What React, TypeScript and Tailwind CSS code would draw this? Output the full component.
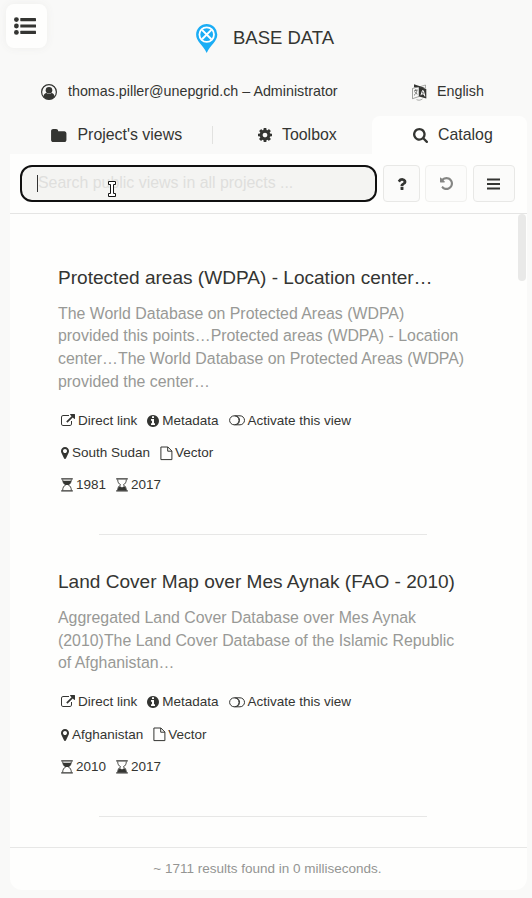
import React from "react";

const paths = {
  search:
    "M1216 832q0-185-131.5-316.5t-316.5-131.5-316.5 131.5-131.5 316.5 131.5 316.5 316.5 131.5 316.5-131.5 131.5-316.5zm512 832q0 52-38 90t-90 38q-54 0-90-38l-343-342q-179 124-399 124-143 0-273.5-55.5t-225-150-150-225-55.5-273.5 55.5-273.5 150-225 225-150 273.5-55.5 273.5 55.5 225 150 150 225 55.5 273.5q0 220-124 399l343 343q37 37 37 90z",
  cog: "M1152 896q0-106-75-181t-181-75-181 75-75 181 75 181 181 75 181-75 75-181zm512-109v222q0 12-8 23t-20 13l-185 28q-19 54-39 91 35 50 107 138 10 12 10 25t-9 23q-27 37-99 108t-94 71q-12 0-26-9l-138-108q-44 23-91 38-16 136-29 186-7 28-36 28h-222q-14 0-24.5-8.5t-11.5-21.5l-28-184q-49-16-90-37l-141 107q-10 9-25 9-14 0-25-11-126-114-165-168-7-10-7-23 0-12 8-23 15-21 51-66.5t54-70.5q-27-50-41-99l-183-27q-13-2-21-12.5t-8-23.5v-222q0-12 8-23t19-13l186-28q14-46 39-92-40-57-107-138-10-12-10-24 0-10 9-23 26-36 98.5-107.5t94.5-71.5q13 0 26 10l138 107q44-23 91-38 16-136 29-186 7-28 36-28h222q14 0 24.5 8.5t11.5 21.5l28 184q49 16 90 37l142-107q9-9 24-9 13 0 25 10 129 119 165 170 7 8 7 22 0 12-8 23-15 21-51 66.5t-54 70.5q26 50 41 98l183 28q13 2 21 12.5t8 23.5z",
  folder:
    "M1728 608v704q0 92-66 158t-158 66h-1216q-92 0-158-66t-66-158v-960q0-92 66-158t158-66h320q92 0 158 66t66 158v32h672q92 0 158 66t66 158z",
  link: "M1408 928v320q0 119-84.5 203.5t-203.5 84.5h-832q-119 0-203.5-84.5t-84.5-203.5v-832q0-119 84.5-203.5t203.5-84.5h704q14 0 23 9t9 23v64q0 14-9 23t-23 9h-704q-66 0-113 47t-47 113v832q0 66 47 113t113 47h832q66 0 113-47t47-113v-320q0-14 9-23t23-9h64q14 0 23 9t9 23zm384-864v512q0 26-19 45t-45 19-45-19l-176-176-652 652q-10 10-23 10t-23-10l-114-114q-10-10-10-23t10-23l652-652-176-176q-19-19-19-45t19-45 45-19h512q26 0 45 19t19 45z",
  info: "M1152 1376v-160q0-14-9-23t-23-9h-96v-512q0-14-9-23t-23-9h-320q-14 0-23 9t-9 23v160q0 14 9 23t23 9h96v320h-96q-14 0-23 9t-9 23v160q0 14 9 23t23 9h448q14 0 23-9t9-23zm-128-896v-160q0-14-9-23t-23-9h-192q-14 0-23 9t-9 23v160q0 14 9 23t23 9h192q14 0 23-9t9-23zm640 416q0 209-103 385.5t-279.5 279.5-385.5 103-385.5-103-279.5-279.5-103-385.5 103-385.5 279.5-279.5 385.5-103 385.5 103 279.5 279.5 103 385.5z",
  marker:
    "M1152 640q0-106-75-181t-181-75-181 75-75 181 75 181 181 75 181-75 75-181zm256 0q0 109-33 179l-364 774q-16 33-47.5 52t-67.5 19-67.5-19-46.5-52l-365-774q-33-70-33-179 0-212 150-362t362-150 362 150 150 362z",
  undo: "M1664 896q0 156-61 298t-164 245-245 164-298 61q-172 0-327-72.5t-264-204.5q-7-10-6.5-22.5t8.5-20.5l137-138q10-9 25-9 16 2 23 12 73 95 179 147t225 52q104 0 198.5-40.5t163.5-109.5 109.5-163.5 40.5-198.5-40.5-198.5-109.5-163.5-163.5-109.5-198.5-40.5q-98 0-188 35.5t-160 101.5l137 138q31 30 14 69-17 40-59 40h-448q-26 0-45-19t-19-45v-448q0-42 40-59 39-17 69 14l130 129q107-101 244.5-156.5t284.5-55.5q156 0 298 61t245 164 164 245 61 298z",
  question:
    "M1088 1256v240q0 16-12 28t-28 12h-240q-16 0-28-12t-12-28v-240q0-16 12-28t28-12h240q16 0 28 12t12 28zm316-600q0 54-15.5 101t-35 76.5-55 59.5-57.5 43.5-61 35.5q-41 23-68.5 65t-27.5 67q0 17-12 32.5t-28 15.5h-240q-15 0-25.5-18.5t-10.5-37.5v-45q0-83 65-156.5t143-108.5q59-27 84-56t25-76q0-42-46.5-74t-107.5-32q-65 0-108 29-35 25-107 115-13 16-31 16-12 0-25-8l-164-125q-13-10-15.5-25t5.5-28q160-266 464-266 80 0 161 31t146 83 106 127.5 41 158.5z",
};

function Icon({ name, box = "0 0 1792 1792", className }: { name: keyof typeof paths; box?: string; className: string }) {
  return (
    <svg viewBox={box} className={`shrink-0 ${className}`} fill="currentColor">
      <path d={paths[name]} />
    </svg>
  );
}

function ListIcon() {
  return (
    <svg viewBox="0 0 22 18" className="h-[18px] w-[22px]" fill="currentColor">
      {[2.6, 9, 15.4].map((y) => (
        <g key={y}>
          <circle cx="2.4" cy={y} r="2.4" />
          <rect x="6.3" y={y - 1.6} width="15.7" height="3.2" rx="0.4" />
        </g>
      ))}
    </svg>
  );
}

function LogoIcon() {
  return (
    <svg viewBox="0 0 22 29" className="h-[29px] w-[22px]">
      <path d="M10.7 0A10.6 10.6 0 0 0 .1 10.6C.1 17.5 6.7 20.6 10.7 29c4-8.400 10.600-11.500 10.600-18.400A10.600 10.600 0 0 0 10.700 0z" fill="#1badf5" />
      <circle cx="10.700" cy="10.600" r="7.300" fill="none" stroke="#fff" strokeWidth="1.800" />
      <path d="M6 5.900l9.400 9.400M15.400 5.900L6 15.300" stroke="#fff" strokeWidth="2" />
    </svg>
  );
}

function UserIcon() {
  return (
    <svg viewBox="0 0 16 16" className="h-4 w-4 shrink-0" fill="currentColor">
      <circle cx="8" cy="8" r="7.400" fill="none" stroke="currentColor" strokeWidth="1.200" />
      <circle cx="8" cy="6.200" r="3.300" />
      <path d="M2.400 12.500c.4-2.300 1.400-3.600 3.200-3.600 1.400 1.200 3.400 1.200 4.800 0 1.800 0 2.800 1.300 3.200 3.600A7.400 7.400 0 0 1 8 15.400a7.400 7.400 0 0 1-5.600-2.900z" />
    </svg>
  );
}

function LanguageIcon() {
  return (
    <svg viewBox="0 0 15 17" className="h-[17px] w-[15px] shrink-0" fill="none" stroke="currentColor">
      <path d="M.5 4.500L7 2.500v10L.5 14.700z" strokeWidth=".6" opacity=".75" />
      <path d="M7 3l6.500-2v3.300M4.500 15.600c2 1 4 .7 6-.7" strokeWidth=".6" opacity=".65" />
      <path d="M2 .3l10.500 3.400v1L7 3.300 2 3.300z" fill="currentColor" stroke="none" />
      <path d="M7 2.700l7.300 2.200v9.700L7 12.500z" fill="currentColor" stroke="none" />
      <path d="M9 11.200l1.500-4.700.9.300 1.500 5.600M9.600 9.600l2.700.8" stroke="#fff" strokeWidth="1" />
      <path d="M2 6.900l3.600-1M3.700 5.200v1.300M5 6.200c-.4 2.400-1.400 4-3 5.200M2.700 7.500c.7 1.400 1.600 2.200 2.800 2.700" strokeWidth=".6" />
    </svg>
  );
}

function ToggleIcon() {
  return (
    <svg viewBox="0 0 16 11" className="h-[11px] w-4 shrink-0" fill="none" stroke="currentColor" strokeWidth="1">
      <path d="M5.500.8H11a4.500 4.500 0 0 1 0 9H5.500" />
      <ellipse cx="5.300" cy="5.300" rx="4.700" ry="4.500" />
      <path d="M7.500 1c4 1.300 4 7.300 0 8.600" />
    </svg>
  );
}

function FileIcon() {
  return (
    <svg viewBox="0 0 13 15" className="h-[15px] w-[13px] shrink-0" fill="none" stroke="currentColor" strokeWidth="1">
      <path d="M.9 1h7l4 4v8.600h-11zM7.700 1v4.200h4.200" />
    </svg>
  );
}

function HourglassIcon({ end = false }: { end?: boolean }) {
  return (
    <svg viewBox="0 0 12 14" className="h-[14px] w-3 shrink-0" fill="currentColor">
      <path d="M.2.300h11.600v1.300H.200zM.200 12.300h11.600v1.300H.200z" />
      <path d="M1.700 1.500c0 2.700 1 4.300 3 5.400-2 1.100-3 2.700-3 5.400M10.300 1.500c0 2.700-1 4.300-3 5.400 2 1.100 3 2.700 3 5.400" fill="none" stroke="currentColor" strokeWidth=".9" />
      {end ? (
        <path d="M1.700 12.500c.1-1.800.7-3 1.700-4h1.200l1.400.9 1.400-.9h1.200c1 1 1.600 2.200 1.700 4z" />
      ) : (
        <path d="M1.800 2.800h8.400C9.900 5 9 6.200 7.400 6.900H4.600C3 6.200 2.100 5 1.800 2.800z" />
      )}
    </svg>
  );
}

function TextCursor() {
  return (
    <svg viewBox="0 0 8 16" className="absolute top-[14px] left-[86px] h-4 w-2">
      <path d="M.5.500h7v3H5.500v9h2v3h-7v-3h2v-9h-2z" fill="#fff" stroke="#151515" />
    </svg>
  );
}

type View = {
  title: string;
  lines: string[];
  place: string;
  start: string;
};

const views: View[] = [
  {
    title: "Protected areas (WDPA) - Location center…",
    lines: [
      "The World Database on Protected Areas (WDPA)",
      "provided this points…Protected areas (WDPA) - Location",
      "center…The World Database on Protected Areas (WDPA)",
      "provided the center…",
    ],
    place: "South Sudan",
    start: "1981",
  },
  {
    title: "Land Cover Map over Mes Aynak (FAO - 2010)",
    lines: [
      "Aggregated Land Cover Database over Mes Aynak",
      "(2010)The Land Cover Database of the Islamic Republic",
      "of Afghanistan…",
    ],
    place: "Afghanistan",
    start: "2010",
  },
];

function ViewItem({ view }: { view: View }) {
  return (
    <article className="flex flex-col pl-12">
      <h2 className="h-[38.500px] text-[19.070px] leading-[27px] whitespace-nowrap">{view.title}</h2>
      <div className="text-[15.890px] leading-[22.700px] whitespace-nowrap text-[#989996]">
        {view.lines.map((line) => (
          <p key={line}>{line}</p>
        ))}
      </div>
      <div className="mt-[11px] flex flex-col pl-[3px] text-[13.500px]">
        <div className="flex h-[33px] items-center">
          <Icon name="link" className="mr-[3px] h-[14px] w-[14px]" />
          <span>Direct link</span>
          <Icon name="info" box="128 128 1536 1536" className="mr-[3px] ml-[10px] h-3 w-3" />
          <span>Metadata</span>
          <span className="mr-[3px] ml-[10px]"><ToggleIcon /></span>
          <span>Activate this view</span>
        </div>
        <div className="flex h-8 items-center">
          <Icon name="marker" box="384 128 1024 1536" className="mr-[3px] h-3 w-2" />
          <span>{view.place}</span>
          <span className="mr-[2px] ml-[10px]"><FileIcon /></span>
          <span>Vector</span>
        </div>
        <div className="flex h-8 items-center">
          <HourglassIcon />
          <span className="ml-[3px]">{view.start}</span>
          <span className="mr-[3px] ml-[10px]"><HourglassIcon end /></span>
          <span>2017</span>
        </div>
      </div>
      <hr className="mt-[33px] ml-[41px] w-[328px] border-[#e7e7e6]" />
    </article>
  );
}

export default function App() {
  return (
    <div className="relative h-[898px] w-[532px] overflow-hidden bg-[#f9f9f8] pt-[3px] pr-[5px] pb-2 pl-[10px] font-['Liberation_Sans',Arial,sans-serif] text-[#343532]">
      <button className="absolute top-1 left-[6px] flex h-[44px] w-[41px] items-center justify-center rounded-lg bg-[#fefefd] pr-[3px] shadow-[0_0_8px_#eeeeec]">
        <ListIcon />
      </button>

      <div className="flex h-[887px] flex-col overflow-hidden rounded-b-xl">
        <header className="flex h-[113px] flex-col">
          <div className="flex h-[70px] items-center pl-[186px]">
            <LogoIcon />
            <h1 className="ml-[15px] text-[18.500px] leading-6">BASE DATA</h1>
          </div>
          <div className="flex h-[38px] items-center pl-[31px] text-[14.300px]">
            <UserIcon />
            <span className="ml-[11px] w-[344px]">thomas.piller@unepgrid.ch – Administrator</span>
            <LanguageIcon />
            <span className="ml-[10px]">English</span>
          </div>
        </header>

        <nav className="flex h-[38px] shrink-0 text-[15.900px]">
          <div className="flex w-[202px] items-center pl-[41px]">
            <Icon name="folder" box="64 128 1664 1408" className="h-[13px] w-[15.500px]" />
            <span className="ml-[11px]">Project's views</span>
          </div>
          <div className="flex w-[160px] items-center">
            <i className="h-[18px] w-px bg-[#e2e2e0]" />
            <Icon name="cog" box="128 128 1536 1536" className="ml-[45px] h-[14px] w-[14px]" />
            <span className="ml-[10px]">Toolbox</span>
          </div>
          <div className="flex flex-1 items-center rounded-t-lg bg-[#fefefd] pl-[41px]">
            <Icon name="search" box="64 128 1664 1664" className="h-[15px] w-[15px]" />
            <span className="ml-[10px]">Catalog</span>
          </div>
        </nav>

        <div className="flex h-[60px] shrink-0 items-start border-b border-[#e5e5e4] bg-[#fefefd] pt-[11px] pl-[10px]">
          <div className="relative flex h-[37px] w-[357px] items-center rounded-[12px] border-2 border-[#101010] bg-[#f4f4f2] pl-[15px]">
            <i className="h-[17px] w-px bg-[#333]" />
            <span className="-mt-[2px] text-[15.900px] text-[#dfdfdd]">Search public views in all projects ...</span>
            <TextCursor />
          </div>
          <button className="ml-[6px] flex h-[37px] w-[37px] items-center justify-center rounded border border-[#e8e8e6] bg-[#fbfbfa]">
            <Icon name="question" box="384 256 1088 1280" className="h-[12px] w-[10px]" />
          </button>
          <button className="ml-[5px] flex h-[37px] w-[42px] items-center justify-center rounded border border-[#f0f0ee] bg-[#fcfcfb] text-[#858684]">
            <Icon name="undo" box="128 128 1536 1536" className="h-[13px] w-[13px]" />
          </button>
          <button className="ml-[6px] flex h-[37px] w-[42px] items-center justify-center rounded border border-[#e8e8e6] bg-[#fbfbfa] pr-px">
            <svg viewBox="0 0 13 12" className="h-3 w-[13px]" fill="currentColor">
              <path d="M0 .500h13v2H0zM0 5h13v2H0zM0 9.500h13v2H0z" />
            </svg>
          </button>
        </div>

        <main className="flex h-[633px] shrink-0 justify-between bg-[#fefefd]">
          <div className="flex flex-col gap-[33px] pt-[50px]">
            {views.map((view) => (
              <ViewItem key={view.title} view={view} />
            ))}
          </div>
          <div className="mr-[1px] h-[67px] w-2 rounded bg-[#e9e9e8]" />
        </main>

        <footer className="flex flex-1 items-center justify-center border-t border-[#e7e7e6] bg-[#fefefd] pr-[2px] text-[13.500px] text-[#949593]">
          ~ 1711 results found in 0 milliseconds.
        </footer>
      </div>
    </div>
  );
}
